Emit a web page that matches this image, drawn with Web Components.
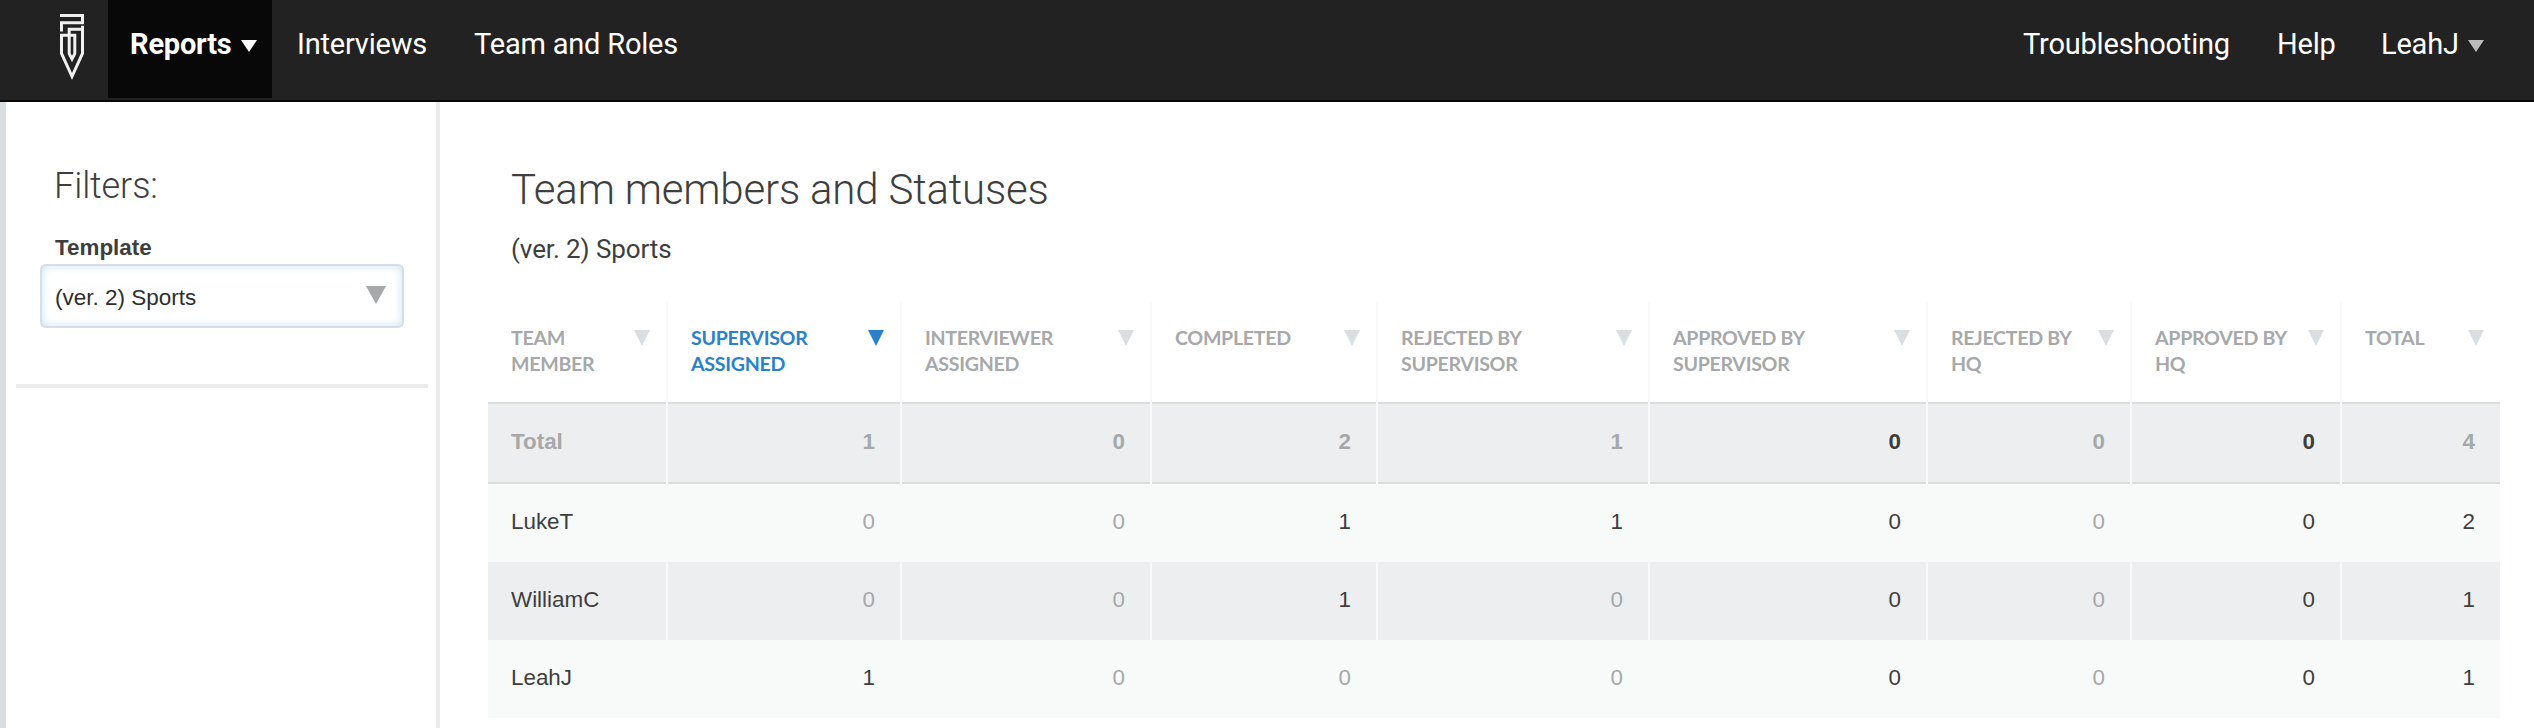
<!DOCTYPE html>
<html lang="en">
<head>
<meta charset="utf-8">
<title>Team members and Statuses</title>
<style>
body { margin: 0; background: #fff; font-family: "Liberation Sans", Arial, sans-serif; color: #3e3e3e; }
</style>
</head>
<body>
<app-shell></app-shell>
<script>
const define = (name, html, setup) => {
  const tpl = document.createElement('template');
  tpl.innerHTML = html;
  customElements.define(name, class extends HTMLElement {
    connectedCallback() {
      if (this.shadowRoot) return;
      this.attachShadow({ mode: 'open' }).append(tpl.content.cloneNode(true));
      if (setup) setup(this, this.shadowRoot);
    }
  });
};

define('caret-down', `
<style>
:host { display: block; width: var(--w, 16px); height: var(--h, 12px); color: var(--caret, #dadee1); flex: none; }
svg { display: block; width: 100%; height: 100%; }
</style>
<svg viewBox="0 0 10 10" preserveAspectRatio="none"><path d="M0 0H10L5 10Z" fill="currentColor"/></svg>`);

define('brand-logo', `
<style>:host { display: block; width: 24px; height: 67px; } svg { display: block; }</style>
<svg width="24" height="67" viewBox="0 0 24 67" fill="none" stroke="#f0f0f0" stroke-width="3">
<path d="M0 1.5H22.5V8.8H1.5V17.5"/>
<path d="M22.5 11.8V39.4L12 62.5L1.5 39.4V21.3H14.8V39.6L12 45L9.2 39.6V15.2H22.5"/>
</svg>`);

define('nav-item', `
<style>
:host { display: flex; align-items: flex-start; height: 98px; box-sizing: border-box; color: #fff;
  font: 400 29px/88px Roboto, sans-serif; letter-spacing: -.2px; white-space: nowrap; }
:host([active]) { background: #080808; font-weight: 700; --caret: #fff; }
caret-down { margin: 40px 0 0 9px; }
</style>
<slot></slot>`, (el, root) => {
  if (el.hasAttribute('menu')) root.append(document.createElement('caret-down'));
});

define('top-nav', `
<style>
:host { display: flex; height: 102px; box-sizing: border-box; background: #222; border-bottom: 2px solid #080808; }
brand-logo { margin: 14px 24px 0 60px; }
nav { display: flex; }
.reports { width: 164px; padding-left: 22px; }
.interviews { padding-left: 25px; width: 202px; }
.right { margin-left: auto; }
.trouble { width: 254px; }
.help { width: 104px; }
.user { width: 153px; --caret: #bbb; }
</style>
<brand-logo></brand-logo>
<nav>
  <nav-item class="reports" active menu>Reports</nav-item>
  <nav-item class="interviews">Interviews</nav-item>
  <nav-item>Team and Roles</nav-item>
</nav>
<nav class="right">
  <nav-item class="trouble">Troubleshooting</nav-item>
  <nav-item class="help">Help</nav-item>
  <nav-item class="user" menu>LeahJ</nav-item>
</nav>`);

define('select-box', `
<style>
:host { display: flex; justify-content: space-between; box-sizing: border-box; width: 364px; height: 64px;
  border: 2px solid #dadee1; border-radius: 6px; box-shadow: inset 0 0 8px #c4e2f8; background: #fff;
  padding: 0 16px 0 13px; font-size: 22.5px; line-height: 64px; color: #2e2e2e; }
caret-down { --w: 20px; --h: 18px; --caret: #a6a8aa; margin-top: 20px; }
</style>
<span><slot></slot></span><caret-down></caret-down>`);

define('filter-panel', `
<style>
:host { display: block; box-sizing: border-box; width: 440px; border-left: 6px solid #dadee1; border-right: 4px solid #ebebeb; padding: 60px 8px 0 10px; }
h2 { margin: 0 0 22px 38px; font: 320 36px/48px Roboto, sans-serif; letter-spacing: -.1px; }
label { display: block; margin-left: 39px; font-weight: 700; font-size: 22.4px; line-height: 32px; }
select-box { margin-left: 24px; }
hr { margin: 56px 0 0; border: 0; height: 4px; background: #ebebeb; }
</style>
<h2>Filters:</h2>
<label>Template</label>
<select-box>(ver. 2) Sports</select-box>
<hr>`);

define('column-head', `
<style>
:host { display: flex; justify-content: space-between; box-sizing: border-box; height: 100px; padding: 23px 16px 0 23px;
  border-right: 2px solid #f8f9f8; color: #a6a8aa; font: 700 19.6px/26px Lato, sans-serif; letter-spacing: -.3px; }
:host(:last-child) { border-right: 0; }
:host([sorted]) { color: #2a81cb; --caret: #2a81cb; }
span { white-space: pre-line; }
caret-down { --w: 16px; --h: 16px; margin-top: 5px; }
</style>
<span><slot></slot></span><caret-down></caret-down>`);

define('data-cell', `
<style>
:host { display: block; box-sizing: border-box; height: 78px; padding: 0 25px 0 23px; border-right: 2px solid #f8faf9;
  line-height: 76px; text-align: right; }
:host(:first-child) { text-align: left; }
:host(:last-child) { border-right: 0; }
:host([muted]) { color: #a6a8aa; }
</style>
<slot></slot>`);

define('data-row', `
<style>
:host { display: grid; grid-template-columns: var(--cols); background: #f8faf9; font-size: 22.4px; }
:host([shaded]) { background: #edeef0; }
:host([total]) { font-weight: 700; }
.cells { display: grid; grid-column: 1 / -1; grid-template-columns: var(--cols); }
.rule { grid-column: 1 / -1; display: none; grid-template-columns: var(--cols); }
:host([total]) .rule { display: grid; }
.rule i { height: 2px; background: #dadddc; border-right: 2px solid #f8faf9; }
.rule i:last-child { border-right: 0; }
</style>`, (el, root) => {
  const cells = el.getAttribute('cells').split('|');
  const rule = () => {
    const r = document.createElement('div');
    r.className = 'rule';
    r.append(...cells.map(() => document.createElement('i')));
    return r;
  };
  const wrap = document.createElement('div');
  wrap.className = 'cells';
  for (const c of cells) {
    const cell = document.createElement('data-cell');
    if (c.startsWith('~')) cell.setAttribute('muted', '');
    cell.textContent = c.replace('~', '');
    wrap.append(cell);
  }
  root.append(rule(), wrap, rule());
});

define('status-table', `
<style>
:host { display: block; width: 2012px; --cols: 180px 234px 250px 226px 272px 278px 204px 210px 158px; }
.head { display: grid; grid-template-columns: var(--cols); }
</style>
<div class="head">
<column-head>TEAM
MEMBER</column-head><column-head sorted>SUPERVISOR
ASSIGNED</column-head><column-head>INTERVIEWER
ASSIGNED</column-head><column-head>COMPLETED</column-head><column-head>REJECTED BY
SUPERVISOR</column-head><column-head>APPROVED BY
SUPERVISOR</column-head><column-head>REJECTED BY
HQ</column-head><column-head>APPROVED BY
HQ</column-head><column-head>TOTAL</column-head>
</div>
<data-row total shaded cells="~Total|~1|~0|~2|~1|0|~0|0|~4"></data-row>
<data-row cells="LukeT|~0|~0|1|1|0|~0|0|2"></data-row>
<data-row shaded cells="WilliamC|~0|~0|1|~0|0|~0|0|1"></data-row>
<data-row cells="LeahJ|1|~0|~0|~0|0|~0|0|1"></data-row>`);

define('app-shell', `
<style>
:host { display: flex; flex-direction: column; height: 728px; overflow: hidden; }
.body { display: flex; flex: 1; }
main { padding: 62px 0 0 48px; }
h1 { margin: 0 0 15px 23px; font: 320 42px/52px Roboto, sans-serif; letter-spacing: -.2px; }
h2 { margin: 0 0 35px 23px; font: 440 26px/36px Roboto, sans-serif; letter-spacing: -.1px; }
</style>
<top-nav></top-nav>
<div class="body">
  <filter-panel></filter-panel>
  <main>
    <h1>Team members and Statuses</h1>
    <h2>(ver. 2) Sports</h2>
    <status-table></status-table>
  </main>
</div>`);
</script>
</body>
</html>
